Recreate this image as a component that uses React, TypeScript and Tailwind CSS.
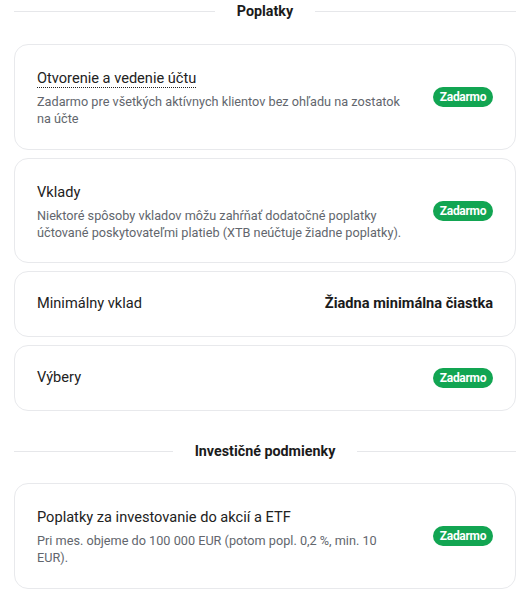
import React from "react";

function Badge() {
  return (
    <span className="inline-flex h-[20px] w-[60px] shrink-0 items-center justify-center rounded-full bg-[#12a552] text-[12px] font-bold leading-none tracking-[-0.3px] text-white">
      Zadarmo
    </span>
  );
}

function SectionHeader({ title }: { title: string }) {
  return (
    <div className="flex items-center gap-[22px]">
      <div className="h-px flex-1 bg-[#e6e7ea]" />
      <div className="text-[14.3px] font-bold leading-[22px] text-[#1b1b1b]">{title}</div>
      <div className="h-px flex-1 bg-[#e6e7ea]" />
    </div>
  );
}

function Card({ children, className = "" }: { children: React.ReactNode; className?: string }) {
  return (
    <div className={"flex items-center justify-between gap-4 rounded-[14px] border border-[#e8e9ec] bg-white px-[22px] " + className}>
      {children}
    </div>
  );
}

function DescCard({ title, desc, underline }: { title: string; desc: string; underline?: boolean }) {
  return (
    <Card className="pt-[22px] pb-[21px]">
      <div className="flex max-w-[369px] flex-col gap-[4px]">
        <div className="text-[14.6px] leading-[22px] text-[#222]">
          <span className={underline ? "border-b border-dotted border-[#222]" : ""}>{title}</span>
        </div>
        <div className="text-[12.7px] leading-[17.3px] text-[#62666d]">{desc}</div>
      </div>
      <Badge />
    </Card>
  );
}

export default function App() {
  return (
    <div className="min-h-[589px] bg-white pl-[14px] pr-[13px] font-['Roboto','Noto_Sans',sans-serif]">
      <SectionHeader title="Poplatky" />
      <div className="mt-[22px] flex flex-col gap-[8px]">
        <DescCard
          title="Otvorenie a vedenie účtu"
          desc="Zadarmo pre všetkých aktívnych klientov bez ohľadu na zostatok na účte"
          underline
        />
        <DescCard
          title="Vklady"
          desc="Niektoré spôsoby vkladov môžu zahŕňať dodatočné poplatky účtované poskytovateľmi platieb (XTB neúčtuje žiadne poplatky)."
        />
        <Card className="h-[66px]">
          <div className="text-[14.6px] text-[#222]">Minimálny vklad</div>
          <div className="text-[14.6px] font-bold text-[#1b1b1b]">Žiadna minimálna čiastka</div>
        </Card>
        <Card className="h-[66px]">
          <div className="text-[14.6px] text-[#222]">Výbery</div>
          <Badge />
        </Card>
      </div>
      <div className="mt-[29px]">
        <SectionHeader title="Investičné podmienky" />
      </div>
      <div className="mt-[21px] flex flex-col gap-[8px]">
        <DescCard
          title="Poplatky za investovanie do akcií a ETF"
          desc="Pri mes. objeme do 100 000 EUR (potom popl. 0,2 %, min. 10 EUR)."
        />
      </div>
    </div>
  );
}
